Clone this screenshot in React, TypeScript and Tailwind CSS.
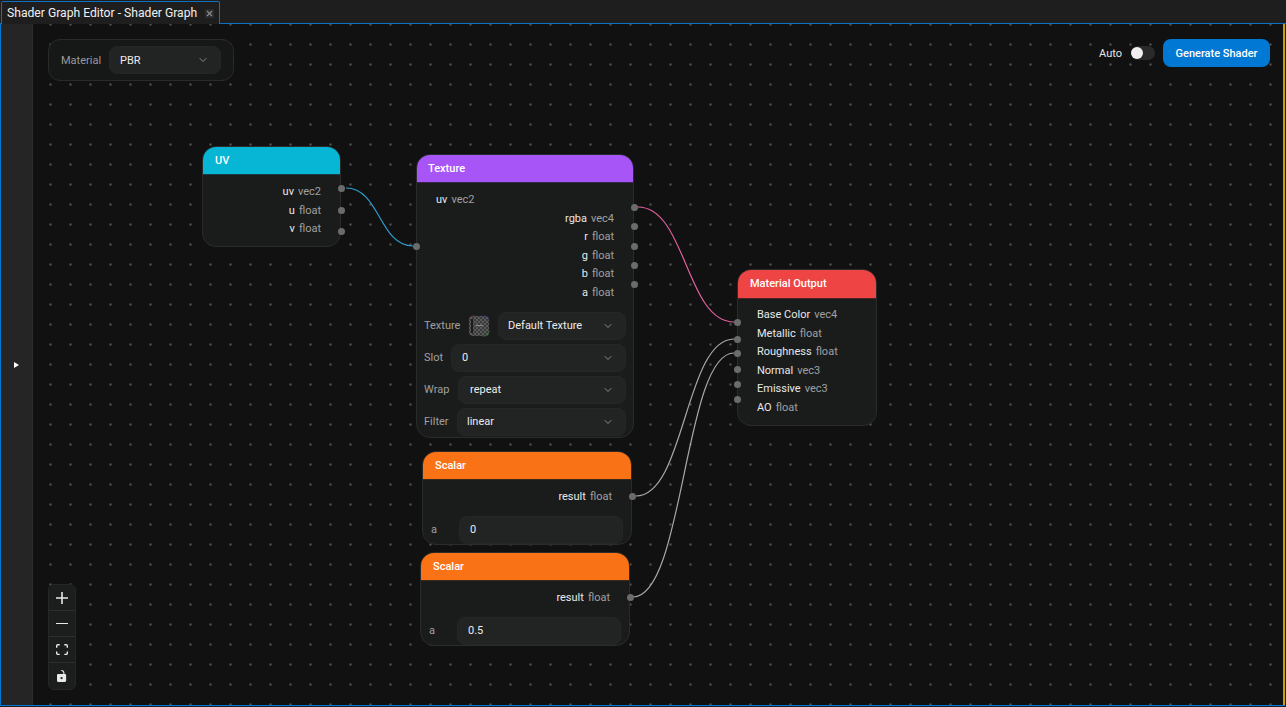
import { ChevronDown, X } from 'lucide-react'

type Port = { name: string; type: string }

const UV_PORTS: Port[] = [
  { name: 'uv', type: 'vec2' },
  { name: 'u', type: 'float' },
  { name: 'v', type: 'float' },
]

const TEXTURE_OUT: Port[] = [
  { name: 'rgba', type: 'vec4' },
  { name: 'r', type: 'float' },
  { name: 'g', type: 'float' },
  { name: 'b', type: 'float' },
  { name: 'a', type: 'float' },
]

const OUTPUT_PORTS: Port[] = [
  { name: 'Base Color', type: 'vec4' },
  { name: 'Metallic', type: 'float' },
  { name: 'Roughness', type: 'float' },
  { name: 'Normal', type: 'vec3' },
  { name: 'Emissive', type: 'vec3' },
  { name: 'AO', type: 'float' },
]

function Handle({ top, side }: { top: number; side: 'left' | 'right' }) {
  return (
    <span
      className={`absolute size-[7px] rounded-full bg-[#6b6b6b] ${side === 'left' ? 'left-[-4px]' : 'right-[-5px]'}`}
      style={{ top }}
    />
  )
}

function PortRow({ port, align }: { port: Port; align: 'left' | 'right' }) {
  return (
    <div className={`flex h-[18.6px] items-center gap-1 pt-[2px] text-[11px] ${align === 'right' ? 'justify-end pr-[19px]' : 'justify-start pl-[19px]'}`}>
      <span className="text-[#e8e8e8]">{port.name}</span>
      <span className="text-[#a0a0a0]">{port.type}</span>
    </div>
  )
}

function Select({ value, className }: { value: string; className?: string }) {
  return (
    <div className={`flex h-7 shrink-0 items-center justify-between rounded-lg border border-[#262626] bg-[#222323] pr-[11px] text-[11px] text-[#ececec] ${className ?? ''}`}>
      <span className="pt-[2px]">{value}</span>
      <ChevronDown className="size-3 text-[#8a8a8a]" />
    </div>
  )
}

function Param({ label, value, pad }: { label: string; value: string; pad: string }) {
  return (
    <div className="flex items-center">
      <span className="pt-[2px] text-[11px] text-[#a0a0a0]">{label}</span>
      <Select value={value} className={`ml-auto ${pad}`} />
    </div>
  )
}

function TextureThumb() {
  return (
    <svg viewBox="0 0 22 22" className="ml-2 size-[22px] shrink-0">
      <defs>
        <pattern id="thumb-check" width="4" height="4" patternUnits="userSpaceOnUse">
          <rect width="4" height="4" fill="#3a3a3a" />
          <rect width="2" height="2" fill="#5a5a5a" />
          <rect x="2" y="2" width="2" height="2" fill="#5a5a5a" />
        </pattern>
      </defs>
      <rect x="1" y="1" width="20" height="20" rx="4" fill="url(#thumb-check)" />
      <rect x="3" y="4" width="2" height="14" fill="#1c1c1c" />
      <rect x="8" y="10" width="7" height="1" fill="#8a8a8a" />
      <path d="M1 6V5a4 4 0 0 1 4-4h3" stroke="#5a3038" fill="none" />
      <path d="M14 1h3a4 4 0 0 1 4 4v2" stroke="#2f3560" fill="none" />
      <path d="M21 15v2a4 4 0 0 1-4 4h-3" stroke="#2f5a38" fill="none" />
    </svg>
  )
}

function ScalarNode({ value, className }: { value: string; className: string }) {
  return (
    <div className={`absolute flex h-[94px] w-[210px] flex-col rounded-[14px] border border-[#2a2b2b] bg-[#1a1c1c] ${className}`}>
      <div className="flex h-[28px] shrink-0 items-center rounded-t-[13px] border-b border-[#3a2a1c] bg-[#f97316] px-3 pt-[1px] text-[11px] font-medium text-white">
        Scalar
      </div>
      <div className="pt-[7px]">
        <PortRow port={{ name: 'result', type: 'float' }} align="right" />
      </div>
      <div className="mt-[10px] flex items-center pl-2 pr-2">
        <span className="w-7 pt-[2px] text-[11px] text-[#a0a0a0]">a</span>
        <div className="flex h-7 flex-1 items-center rounded-lg border border-[#262626] bg-[#222323] px-[10px] pt-[2px] text-[11px] text-[#ececec]">
          {value}
        </div>
      </div>
      <Handle top={41} side="right" />
    </div>
  )
}

function ZoomButton({ children, last }: { children: React.ReactNode; last?: boolean }) {
  return (
    <div className={`flex h-[26px] w-[26px] items-center justify-center bg-[#1c1d1d] ${last ? '' : 'border-b border-[#2e2e2e]'}`}>
      {children}
    </div>
  )
}

export default function App() {
  return (
    <div className="flex h-screen w-full flex-col overflow-hidden bg-[#1e1e1e] font-['Roboto','Noto_Sans',sans-serif] text-white">
      {/* Tab strip */}
      <div className="relative flex h-6 shrink-0 items-end border-b border-[#0e70c0] bg-[#1e1e1e] pl-px pr-[3px]">
        <div className="relative top-px flex h-[23px] w-[219px] items-center gap-2 rounded-t-[2px] border-x border-t border-[#0e70c0] bg-[#1e1e1e] pl-[5px] text-[12.15px] text-[#f0f0f0]">
          <span className="whitespace-nowrap">Shader Graph Editor - Shader Graph</span>
          <span className="flex size-[9px] items-center justify-center bg-[#2b2b2b]">
            <X className="size-[9px] text-[#8f8f8f]" strokeWidth={3} />
          </span>
        </div>
      </div>

      {/* Editor body */}
      <div className="mb-px mr-px flex min-h-0 flex-1 border-b border-l border-[#0078d4]">
        <div className="flex w-8 shrink-0 items-center justify-center border-r border-[#2c2c2c] bg-[#252526]">
          <span className="h-0 w-0 border-y-[3.5px] border-l-[5px] border-y-transparent border-l-white" />
        </div>

        <div className="relative min-w-0 flex-1 bg-[#111111] bg-[radial-gradient(circle,#808080_0.6px,transparent_0.9px)] bg-[length:20px_20px] bg-[position:7.5px_-9.5px]">
          {/* Edges */}
          <svg className="pointer-events-none absolute inset-0 h-full w-full" viewBox="33 24 1250 681" fill="none">
            <path d="M346 188C380 188 379 246 413 246" stroke="#2f9fd0" strokeWidth="1.2" />
            <path d="M638 207C686 207 686 322 734 322" stroke="#e0609f" strokeWidth="1.2" />
            <path d="M636 496C685 496 685 339 734 339" stroke="#a8a8a8" strokeWidth="1.2" />
            <path d="M633 597C684 597 684 353 734 353" stroke="#a8a8a8" strokeWidth="1.2" />
          </svg>

          {/* Material picker */}
          <div className="absolute left-[15px] top-[15px] flex h-[42px] w-[186px] items-center rounded-xl border border-[#2a2a2a] bg-[#161717] pl-3 pr-3">
            <span className="pt-[2px] text-[11px] text-[#9a9a9a]">Material</span>
            <Select value="PBR" className="ml-auto w-28 pl-[10px]" />
          </div>

          {/* Actions */}
          <div className="absolute right-[13px] top-[15px] flex items-center">
            <span className="pt-[2px] text-[11px] text-[#e6e6e6]">Auto</span>
            <span className="ml-[9px] flex h-[14px] w-6 items-center rounded-full bg-[#2a2a2a]">
              <span className="size-3 rounded-full bg-[#f0f0f0]" />
            </span>
            <button className="ml-2 h-7 w-[107px] rounded-lg bg-[#0078d4] pt-[2px] text-[11px] font-medium text-white">
              Generate Shader
            </button>
          </div>

          {/* UV node */}
          <div className="absolute left-[169px] top-[122px] h-[101px] w-[139px] rounded-[14px] border border-[#2a2b2b] bg-[#1a1c1c]">
            <div className="flex h-[28px] items-center rounded-t-[13px] border-b border-[#1b3a44] bg-[#06b6d4] px-3 pt-[1px] text-[11px] font-medium text-white">
              UV
            </div>
            <div className="pt-[7px]">
              {UV_PORTS.map((p) => <PortRow key={p.name} port={p} align="right" />)}
            </div>
            <Handle top={38} side="right" />
            <Handle top={60} side="right" />
            <Handle top={81} side="right" />
          </div>

          {/* Texture node */}
          <div className="absolute left-[383px] top-[130px] flex h-[284px] w-[218px] flex-col rounded-[14px] border border-[#2a2b2b] bg-[#1a1c1c]">
            <div className="flex h-[28px] shrink-0 items-center rounded-t-[13px] border-b border-[#35284a] bg-[#a855f7] pl-[11px] pr-3 pt-[1px] text-[11px] font-medium text-white">
              Texture
            </div>
            <div className="pt-[7px]">
              <PortRow port={{ name: 'uv', type: 'vec2' }} align="left" />
              {TEXTURE_OUT.map((p) => <PortRow key={p.name} port={p} align="right" />)}
            </div>
            <div className="mt-[10px] flex flex-col gap-1 pl-[7px] pr-[7px]">
              <div className="flex items-center">
                <span className="w-9 pt-[2px] text-[11px] text-[#a0a0a0]">Texture</span>
                <TextureThumb />
                <Select value="Default Texture" className="ml-2 w-[128px] pl-[9px]" />
              </div>
              <Param label="Slot" value="0" pad="w-[175px] pl-[10px]" />
              <Param label="Wrap" value="repeat" pad="w-[168px] pl-[11px]" />
              <Param label="Filter" value="linear" pad="w-[169px] pl-[9px]" />
            </div>
            <Handle top={88} side="left" />
            <Handle top={49} side="right" />
            <Handle top={68} side="right" />
            <Handle top={88} side="right" />
            <Handle top={107} side="right" />
            <Handle top={126} side="right" />
          </div>

          <ScalarNode value="0" className="left-[389px] top-[427px]" />
          <ScalarNode value="0.5" className="left-[387px] top-[528px]" />

          {/* Material output node */}
          <div className="absolute left-[704px] top-[245px] h-[157px] w-[140px] rounded-[14px] border border-[#2a2b2b] bg-[#1a1c1c]">
            <div className="flex h-[29px] items-center rounded-t-[13px] border-b border-[#4a2424] bg-[#ef4444] px-3 pt-[1px] text-[11px] font-medium text-white">
              Material Output
            </div>
            <div className="pt-[6px]">
              {OUTPUT_PORTS.map((p) => <PortRow key={p.name} port={p} align="left" />)}
            </div>
            <Handle top={49} side="left" />
            <Handle top={66} side="left" />
            <Handle top={80} side="left" />
            <Handle top={96} side="left" />
            <Handle top={111} side="left" />
            <Handle top={126} side="left" />
          </div>

          {/* Zoom controls */}
          <div className="absolute left-[15px] top-[560px] flex w-[28px] flex-col overflow-hidden rounded-md border border-[#262626] bg-[#1c1d1d]">
            <ZoomButton>
              <svg viewBox="0 0 32 32" className="size-3 fill-[#e8e8e8]"><path d="M32 18.133H18.133V32h-4.266V18.133H0v-4.266h13.867V0h4.266v13.867H32z" /></svg>
            </ZoomButton>
            <ZoomButton>
              <svg viewBox="0 0 32 5" className="w-3 fill-[#e8e8e8]"><path d="M0 0h32v4.2H0z" /></svg>
            </ZoomButton>
            <ZoomButton>
              <svg viewBox="0 0 32 30" className="w-3 fill-[#e8e8e8]"><path d="M3.692 4.63c0-.53.4-.938.939-.938h5.215V0H4.708C2.13 0 0 2.054 0 4.63v5.216h3.692V4.631zM27.354 0h-5.2v3.692h5.17c.53 0 .984.4.984.939v5.215H32V4.631A4.624 4.624 0 0027.354 0zm.954 24.83c0 .532-.4.94-.939.94h-5.215v3.768h5.215c2.577 0 4.631-2.13 4.631-4.707v-5.139h-3.692v5.139zm-23.677.94c-.531 0-.939-.4-.939-.94v-5.138H0v5.139c0 2.577 2.13 4.707 4.708 4.707h5.138V25.77H4.631z" /></svg>
            </ZoomButton>
            <ZoomButton last>
              <svg viewBox="0 0 25 32" className="h-3 fill-[#e8e8e8]"><path d="M21.333 10.667H19.81V7.619C19.81 3.429 16.38 0 12.19 0c-4.114 1.828-1.37 2.133.305 2.438 1.676.305 4.42 2.59 4.42 5.181v3.048H3.047A3.056 3.056 0 000 13.714v15.238A3.056 3.056 0 003.048 32h18.285a3.056 3.056 0 003.048-3.048V13.714a3.056 3.056 0 00-3.048-3.047zM12.19 24.533a3.056 3.056 0 01-3.047-3.047 3.056 3.056 0 013.047-3.048 3.056 3.056 0 013.048 3.048 3.056 3.056 0 01-3.048 3.047z" /></svg>
            </ZoomButton>
          </div>
        </div>

        <div className="w-[2px] shrink-0 bg-[#c8a200]" />
      </div>
    </div>
  )
}
